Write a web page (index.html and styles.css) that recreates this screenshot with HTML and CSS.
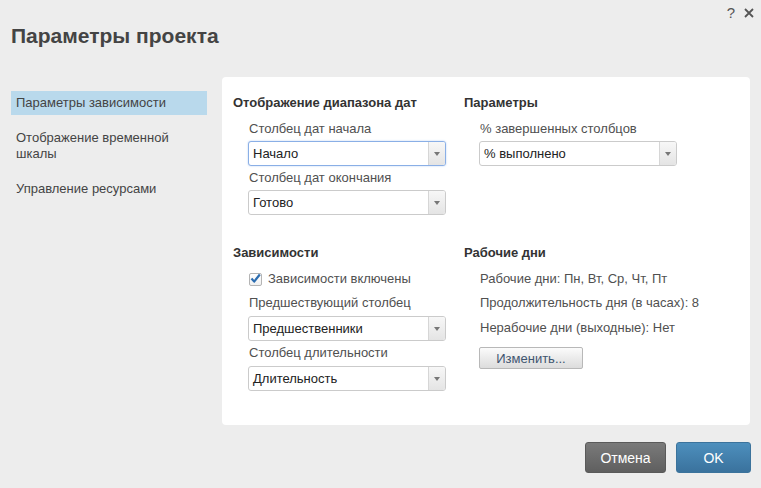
FILE: index.html
```html
<!DOCTYPE html>
<html lang="ru">
<head>
<meta charset="utf-8">
<title>Параметры проекта</title>
<link rel="stylesheet" href="styles.css">
</head>
<body>
<div class="dialog">
  <div class="topbar">
    <span class="help">?</span>
    <svg class="close" width="10" height="10" viewBox="0 0 10 10"><path d="M1 1L9 9M9 1L1 9" stroke="#555" stroke-width="1.8" fill="none"/></svg>
  </div>
  <h1 class="title">Параметры проекта</h1>
  <div class="main">
    <nav class="nav">
      <div class="nav-item active">Параметры зависимости</div>
      <div class="nav-item">Отображение временной шкалы</div>
      <div class="nav-item">Управление ресурсами</div>
    </nav>
    <div class="panel">
      <section class="section">
        <h2 class="heading">Отображение диапазона дат</h2>
        <div class="fields">
          <div class="label">Столбец дат начала</div>
          <div class="select focused"><span class="value">Начало</span><span class="arrow"></span></div>
          <div class="label">Столбец дат окончания</div>
          <div class="select"><span class="value">Готово</span><span class="arrow"></span></div>
        </div>
      </section>
      <section class="section">
        <h2 class="heading">Параметры</h2>
        <div class="fields">
          <div class="label">% завершенных столбцов</div>
          <div class="select"><span class="value">% выполнено</span><span class="arrow"></span></div>
        </div>
      </section>
      <section class="section">
        <h2 class="heading">Зависимости</h2>
        <div class="fields">
          <div class="check-row">
            <span class="checkbox"><svg width="11" height="11" viewBox="0 0 11 11"><path d="M1.5 5.5L4.2 8.6L9.8 1.5" stroke="#2c6db0" stroke-width="2.2" fill="none" stroke-linejoin="round"/></svg></span>
            <span class="check-label">Зависимости включены</span>
          </div>
          <div class="label spaced">Предшествующий столбец</div>
          <div class="select gap5"><span class="value">Предшественники</span><span class="arrow"></span></div>
          <div class="label">Столбец длительности</div>
          <div class="select gap5"><span class="value">Длительность</span><span class="arrow"></span></div>
        </div>
      </section>
      <section class="section">
        <h2 class="heading">Рабочие дни</h2>
        <div class="fields info">
          <div class="info-line">Рабочие дни: Пн, Вт, Ср, Чт, Пт</div>
          <div class="info-line">Продолжительность дня (в часах): 8</div>
          <div class="info-line">Нерабочие дни (выходные): Нет</div>
          <button class="btn-change">Изменить...</button>
        </div>
      </section>
    </div>
  </div>
  <div class="footer">
    <button class="btn btn-cancel">Отмена</button>
    <button class="btn btn-ok">OK</button>
  </div>
</div>
</body>
</html>
```
FILE: styles.css
```css
* { box-sizing: border-box; }
html, body {
  margin: 0;
  padding: 0;
  background: #ededed;
  width: 761px;
  height: 488px;
  overflow: hidden;
}
body {
  font-family: "Liberation Sans", Arial, sans-serif;
  font-size: 13px;
  color: #444;
}
.dialog { width: 761px; height: 488px; }
.topbar {
  display: flex;
  justify-content: flex-end;
  align-items: center;
  gap: 9px;
  height: 22px;
  padding: 3px 7px 0 0;
}
.help {
  font-size: 15px;
  line-height: 16px;
  color: #555;
}
.close { display: block; margin-top: 1px; }
.title {
  margin: 2px 0 0 11px;
  font-size: 21px;
  line-height: 24px;
  font-weight: bold;
  color: #444;
}
.main {
  display: flex;
  gap: 15px;
  margin-top: 29px;
  padding-left: 11px;
}
.nav {
  width: 196px;
  margin-top: 14px;
  display: flex;
  flex-direction: column;
  gap: 11px;
}
.nav-item {
  padding: 4px 5px;
  line-height: 16px;
  color: #444;
}
.nav-item.active { background: #b9d9ec; }
.panel {
  width: 528px;
  background: #fff;
  border-radius: 4px;
  padding: 18px 11px 34px 11px;
  display: grid;
  grid-template-columns: 231px 1fr;
  row-gap: 30px;
}
.heading {
  margin: 0;
  font-size: 13px;
  line-height: 16px;
  font-weight: bold;
  color: #333;
}
.fields {
  padding-left: 15px;
  margin-top: 10px;
  display: flex;
  flex-direction: column;
  align-items: flex-start;
}
.label {
  line-height: 16px;
  padding-left: 1px;
  color: #505050;
}
.label + .select { margin-top: 4px; }
.select + .label { margin-top: 4px; }
.label + .select.gap5 { margin-top: 5px; }
.label.spaced { margin-top: 8px; }
.select {
  display: flex;
  width: 198px;
  height: 25px;
  border: 1px solid #cbcbcb;
  border-radius: 3px;
  background: #fff;
}
.select.focused {
  border-color: #8aafe6;
  box-shadow: 0 0 2px #b5ccf0;
}
.value {
  flex: 1;
  padding-left: 4px;
  line-height: 23px;
  color: #222;
}
.arrow {
  width: 17px;
  border-left: 1px solid #d6d6d6;
  border-radius: 0 2px 2px 0;
  background: linear-gradient(#f7f7f7, #e4e4e4);
  display: flex;
  align-items: center;
  justify-content: center;
}
.arrow::after {
  content: "";
  width: 0;
  height: 0;
  border-left: 3.5px solid transparent;
  border-right: 3.5px solid transparent;
  border-top: 4px solid #777;
  margin-top: 1px;
}
.check-row {
  display: flex;
  align-items: center;
  gap: 6px;
  height: 16px;
}
.checkbox {
  width: 13px;
  height: 13px;
  border: 1px solid #b4b4b4;
  border-radius: 2px;
  background: linear-gradient(#fff, #f0f0f0);
  display: flex;
  align-items: center;
  justify-content: center;
  margin-left: 1px;
}
.checkbox svg { display: block; margin-top: -1px; }
.check-label { color: #505050; line-height: 16px; }
.info { gap: 8px; }
.info-line { line-height: 16px; color: #505050; padding-left: 1px; }
.info-line + .info-line + .info-line { margin-top: 1px; }
.btn-change {
  margin-top: 3px;
  width: 104px;
  height: 22px;
  border: 1px solid #b8b8b8;
  border-radius: 2px;
  background: linear-gradient(#fbfbfb, #dcdcdc);
  font-family: "Liberation Sans", Arial, sans-serif;
  font-size: 13px;
  color: #3f5570;
  padding: 0;
}
.footer {
  display: flex;
  justify-content: flex-end;
  gap: 10px;
  padding: 17px 10px 0 0;
}
.btn {
  height: 31px;
  border-radius: 3px;
  font-family: "Liberation Sans", Arial, sans-serif;
  font-size: 14px;
  color: #fff;
  padding: 0;
}
.btn-cancel {
  width: 81px;
  border: 1px solid #5a5a5a;
  background: linear-gradient(#7a7a7a, #5f5f5f);
}
.btn-ok {
  width: 75px;
  border: 1px solid #3b739c;
  background: linear-gradient(#4d8fbd, #3a729d);
}
```
